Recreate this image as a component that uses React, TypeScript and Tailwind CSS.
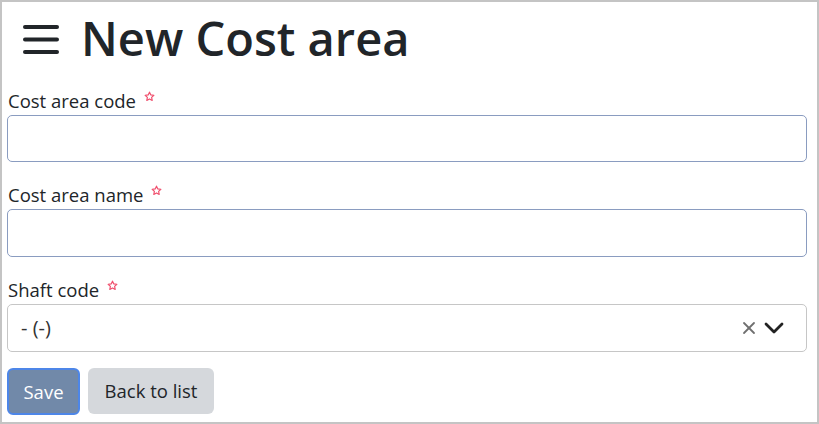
import React from "react";

function Star() {
  return (
    <svg width="11" height="11" viewBox="0 0 24 24" className="ml-[8px] -mt-[10px] shrink-0">
      <path
        d="M12 2.5l2.9 6.1 6.6.8-4.9 4.6 1.3 6.6L12 17.3l-5.9 3.3 1.3-6.6-4.9-4.6 6.6-.8z"
        fill="none"
        stroke="#f0506e"
        strokeWidth="2.6"
        strokeLinejoin="round"
      />
    </svg>
  );
}

function Label({ text }: { text: string }) {
  return (
    <div className="flex items-center h-[26px] mb-px pl-[1px] text-[18.5px] leading-[26px] text-[#212529]">
      <span>{text}</span>
      <Star />
    </div>
  );
}

export default function App() {
  return (
    <div
      className="w-[819px] h-[424px] border-2 border-[#c4c4c4] bg-white pl-[5px] pr-[10px] pt-[10px] flex flex-col"
      style={{ fontFamily: '"Open Sans", "Noto Sans", sans-serif' }}
    >
      <div className="flex items-center h-[52px] pl-[16px]">
        <svg width="36" height="30" viewBox="0 0 36 30" className="mr-[22px] mt-[2px]">
          <g stroke="#212529" strokeWidth="4" strokeLinecap="round">
            <line x1="2" y1="3" x2="34" y2="3" />
            <line x1="2" y1="15.5" x2="34" y2="15.5" />
            <line x1="2" y1="28" x2="34" y2="28" />
          </g>
        </svg>
        <h1 className="text-[47px] leading-[52px] font-semibold text-[#212529]">New Cost area</h1>
      </div>

      <div className="mt-[24px]">
        <Label text="Cost area code" />
        <div className="h-[47px] rounded-[5px] border border-[#8a9cc0] bg-white" />
      </div>

      <div className="mt-[20px]">
        <Label text="Cost area name" />
        <div className="h-[48px] rounded-[5px] border border-[#8a9cc0] bg-white" />
      </div>

      <div className="mt-[20px]">
        <Label text="Shaft code" />
        <div className="h-[48px] rounded-[5px] border border-[#c6c6c6] bg-white flex items-center pl-[13px] pr-[22px]">
          <span className="text-[20px] text-[#333333] flex-1">- (-)</span>
          <svg width="14" height="14" viewBox="0 0 14 14" className="mr-[8px]">
            <g stroke="#6f6f6f" strokeWidth="1.8" strokeLinecap="round">
              <line x1="2" y1="2" x2="12" y2="12" />
              <line x1="12" y1="2" x2="2" y2="12" />
            </g>
          </svg>
          <svg width="20" height="12" viewBox="0 0 20 12">
            <polyline
              points="2,2 10,10 18,2"
              fill="none"
              stroke="#222222"
              strokeWidth="2.8"
              strokeLinecap="round"
              strokeLinejoin="round"
            />
          </svg>
        </div>
      </div>

      <div className="flex gap-[8px] mt-[16px]">
        <button className="w-[73px] h-[47px] rounded-[6px] border-2 border-[#4d86e8] bg-[#7189a9] text-white text-[18.5px]">
          Save
        </button>
        <button className="w-[126px] h-[46px] rounded-[6px] bg-[#d5d8dc] text-[#212529] text-[18.5px]">
          Back to list
        </button>
      </div>
    </div>
  );
}
